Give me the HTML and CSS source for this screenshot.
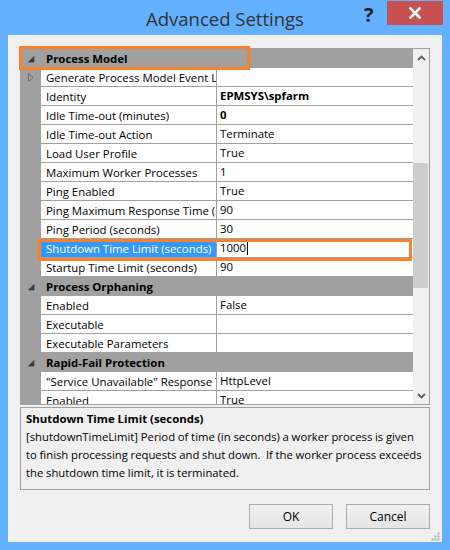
FILE: index.html
```html
<!DOCTYPE html>
<html>
<head>
<meta charset="utf-8">
<link rel="stylesheet" href="styles.css">
</head>
<body>
<div class="window">
  <div class="titlebar">
    <div class="title">Advanced Settings</div>
    <div class="help">?</div>
    <div class="close">
      <svg width="12" height="12" viewBox="0 0 12 12"><path d="M1.5 1.5 L10.5 10.5 M10.5 1.5 L1.5 10.5" stroke="#fff" stroke-width="2.6" stroke-linecap="square"/></svg>
    </div>
  </div>
  <div class="client">
    <div class="grid">
      <div class="rows">
        <div class="cat"><span class="glyph"><svg width="7" height="7" viewBox="0 0 7 7"><path d="M6 0.5 L6 6 L0.5 6 Z" fill="#3c3c3c" stroke="#3c3c3c" stroke-width="0.8" stroke-linejoin="round"/></svg></span><span class="catname">Process Model</span></div>
        <div class="row"><span class="margin"><svg width="6" height="9" viewBox="0 0 6 9"><path d="M0.5 0.5 L5 4.5 L0.5 8.5 Z" fill="none" stroke="#6a6a6a" stroke-width="1"/></svg></span><span class="name">Generate Process Model Event Log Entry</span><span class="val"></span></div>
        <div class="row"><span class="margin"></span><span class="name">Identity</span><span class="val bold">EPMSYS\spfarm</span></div>
        <div class="row"><span class="margin"></span><span class="name">Idle Time-out (minutes)</span><span class="val bold">0</span></div>
        <div class="row"><span class="margin"></span><span class="name">Idle Time-out Action</span><span class="val">Terminate</span></div>
        <div class="row"><span class="margin"></span><span class="name">Load User Profile</span><span class="val">True</span></div>
        <div class="row"><span class="margin"></span><span class="name">Maximum Worker Processes</span><span class="val">1</span></div>
        <div class="row"><span class="margin"></span><span class="name">Ping Enabled</span><span class="val">True</span></div>
        <div class="row"><span class="margin"></span><span class="name">Ping Maximum Response Time (seconds)</span><span class="val">90</span></div>
        <div class="row"><span class="margin"></span><span class="name">Ping Period (seconds)</span><span class="val">30</span></div>
        <div class="row selected"><span class="margin"></span><span class="name">Shutdown Time Limit (seconds)</span><span class="val">1000<span class="caret"></span></span></div>
        <div class="row"><span class="margin"></span><span class="name">Startup Time Limit (seconds)</span><span class="val">90</span></div>
        <div class="cat"><span class="glyph"><svg width="7" height="7" viewBox="0 0 7 7"><path d="M6 0.5 L6 6 L0.5 6 Z" fill="#3c3c3c" stroke="#3c3c3c" stroke-width="0.8" stroke-linejoin="round"/></svg></span><span class="catname">Process Orphaning</span></div>
        <div class="row"><span class="margin"></span><span class="name">Enabled</span><span class="val">False</span></div>
        <div class="row"><span class="margin"></span><span class="name">Executable</span><span class="val"></span></div>
        <div class="row"><span class="margin"></span><span class="name">Executable Parameters</span><span class="val"></span></div>
        <div class="cat"><span class="glyph"><svg width="7" height="7" viewBox="0 0 7 7"><path d="M6 0.5 L6 6 L0.5 6 Z" fill="#3c3c3c" stroke="#3c3c3c" stroke-width="0.8" stroke-linejoin="round"/></svg></span><span class="catname">Rapid-Fail Protection</span></div>
        <div class="row"><span class="margin"></span><span class="name">"Service Unavailable" Response Type</span><span class="val">HttpLevel</span></div>
        <div class="row"><span class="margin"></span><span class="name">Enabled</span><span class="val">True</span></div>
      </div>
      <div class="scrollbar">
        <div class="sbtn"><svg width="9" height="6" viewBox="0 0 9 6"><path d="M1 5 L4.5 1.5 L8 5" fill="none" stroke="#606060" stroke-width="1.8"/></svg></div>
        <div class="track"><div class="thumb"></div></div>
        <div class="sbtn"><svg width="9" height="6" viewBox="0 0 9 6"><path d="M1 1 L4.5 4.5 L8 1" fill="none" stroke="#606060" stroke-width="1.8"/></svg></div>
      </div>
    </div>
    <div class="desc">
      <div class="desc-title">Shutdown Time Limit (seconds)</div>
      <div class="desc-text">[shutdownTimeLimit] Period of time (in seconds) a worker process is given<br>to finish processing requests and shut down.&nbsp; If the worker process exceeds<br>the shutdown time limit, it is terminated.</div>
    </div>
    <div class="buttons">
      <button class="btn">OK</button>
      <button class="btn">Cancel</button>
    </div>
    <div class="hl hl-cat"></div>
    <div class="hl hl-row"></div>
    <div class="grip"><svg width="9" height="9" viewBox="0 0 9 9" fill="#b0b0b0"><rect x="6.5" y="0.5" width="2" height="2"/><rect x="3.5" y="3.5" width="2" height="2"/><rect x="6.5" y="3.5" width="2" height="2"/><rect x="0.5" y="6.5" width="2" height="2"/><rect x="3.5" y="6.5" width="2" height="2"/><rect x="6.5" y="6.5" width="2" height="2"/></svg></div>
  </div>
</div>
</body>
</html>
```

FILE: styles.css
```css
html, body {
  margin: 0;
  padding: 0;
}
body {
  width: 450px;
  height: 550px;
  background: #62b0fe;
  font-family: "Open Sans", "Noto Sans", "DejaVu Sans", sans-serif;
  font-size: 11.4px;
  color: #000;
  overflow: hidden;
}
.window {
  width: 450px;
  height: 550px;
  display: flex;
  flex-direction: column;
}
.titlebar {
  height: 35px;
  position: relative;
  display: flex;
  align-items: center;
  justify-content: center;
}
.title {
  font-size: 18.5px;
  color: #333;
  margin-top: 2px;
}
.help {
  position: absolute;
  left: 364px;
  top: 1px;
  font-size: 20px;
  font-weight: bold;
  color: #222;
}
.close {
  position: absolute;
  left: 387px;
  top: 1px;
  width: 56px;
  height: 24px;
  background: #c75050;
  display: flex;
  align-items: center;
  justify-content: center;
}
.client {
  margin: 0 8px 8px 8px;
  height: 507px;
  background: #f0f0f0;
  padding: 13px 12px 0 12px;
  box-sizing: border-box;
  position: relative;
}
.grid {
  height: 357px;
  border: 1px solid #a0a0a0;
  box-sizing: border-box;
  display: flex;
  background: #fff;
}
.rows {
  flex: 1;
  overflow: hidden;
}
.cat {
  height: 19px;
  background: #a0a0a0;
  display: flex;
  align-items: center;
}
.glyph {
  width: 20px;
  display: flex;
  justify-content: center;
  margin-top: 1px;
}
.catname {
  font-weight: bold;
  padding-left: 5px;
  white-space: nowrap;
  line-height: 20px;
  margin-top: 1px;
}
.row {
  height: 19px;
  display: flex;
}
.margin {
  width: 20px;
  flex: none;
  background: #a0a0a0;
  display: flex;
  align-items: center;
  justify-content: center;
}
.name {
  flex: none;
  width: 176px;
  border-right: 1px solid #a0a0a0;
  border-bottom: 1px solid #a0a0a0;
  padding-left: 5px;
  box-sizing: border-box;
  white-space: nowrap;
  overflow: hidden;
  line-height: 20px;
}
.val {
  flex: 1;
  border-bottom: 1px solid #a0a0a0;
  padding-left: 3px;
  white-space: nowrap;
  overflow: hidden;
  line-height: 20px;
  display: flex;
  align-items: center;
}
.bold {
  font-weight: bold;
}
.selected .name {
  background: #3399ff;
  color: #fff;
}
.caret {
  display: inline-block;
  width: 1px;
  height: 14px;
  background: #000;
  margin-left: 1px;
}
.hl {
  position: absolute;
  border: 3px solid #fd7f28;
  box-sizing: border-box;
}
.hl-cat {
  left: 11px;
  top: 11px;
  width: 231px;
  height: 24px;
}
.hl-row {
  left: 29px;
  top: 204px;
  width: 375px;
  height: 22px;
}
.scrollbar {
  width: 16px;
  background: #f0f0f0;
  display: flex;
  flex-direction: column;
}
.sbtn {
  height: 17px;
  display: flex;
  align-items: center;
  justify-content: center;
}
.track {
  flex: 1;
}
.thumb {
  margin-top: 97px;
  width: 15px;
  height: 125px;
  background: #cdcdcd;
}
.desc {
  margin-top: 2px;
  height: 83px;
  border: 1px solid #a0a0a0;
  box-sizing: border-box;
  padding: 2px 0 0 5px;
  line-height: 18px;
}
.desc-title {
  font-weight: bold;
}
.desc-text {
  font-size: 11.3px;
  word-spacing: -0.2px;
  white-space: nowrap;
}
.buttons {
  margin-top: 14px;
  display: flex;
  justify-content: flex-end;
  gap: 13px;
}
.btn {
  width: 84px;
  height: 25px;
  border: 1px solid #acacac;
  background: linear-gradient(#f0f0f0, #e5e5e5);
  font-family: inherit;
  font-size: 12px;
  color: #000;
  padding: 0;
}
.grip {
  position: absolute;
  right: 2px;
  bottom: 1px;
  line-height: 0;
}
```
